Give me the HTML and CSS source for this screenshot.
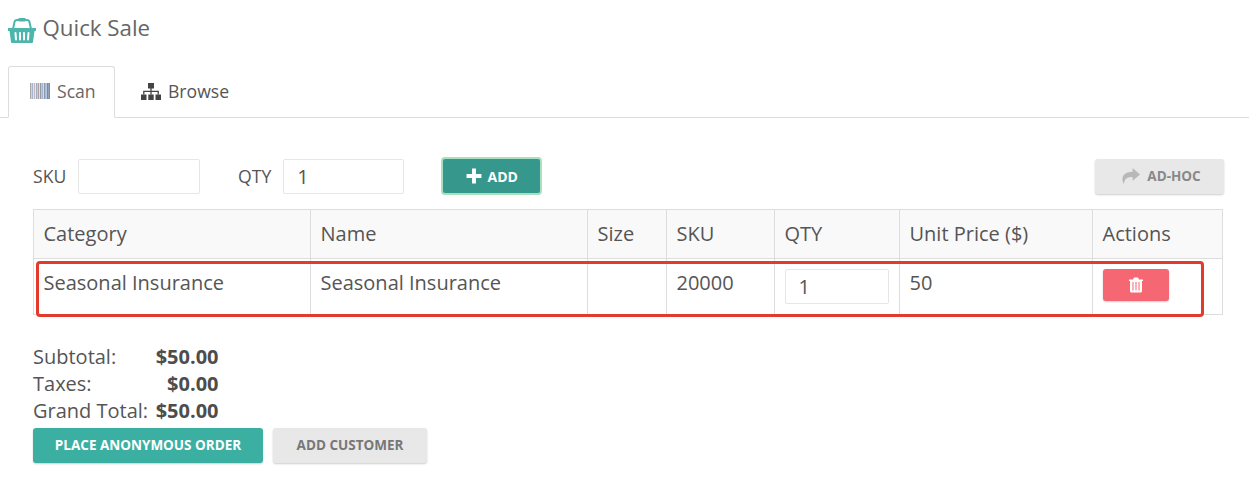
FILE: index.html
```html
<!DOCTYPE html>
<html lang="en">
<head>
<meta charset="utf-8">
<title>Quick Sale</title>
<link rel="stylesheet" href="styles.css">
</head>
<body>
<h1 class="title">
  <svg class="basket" viewBox="0 0 28 26" width="28" height="26" aria-hidden="true">
    <path d="M5 12 L6.5 5 Q7 3 9 3 H19 Q21 3 21.500 5 L23 12" fill="none" stroke="#4db6ac" stroke-width="2"/>
    <rect x="10" y="1" width="8" height="3.600" rx="1.500" fill="#4db6ac"/>
    <path d="M0 11 H28 V14 H26.500 L25 25 Q24.900 26 24 26 H4 Q3.100 26 3 25 L1.500 14 H0 Z" fill="#4db6ac"/>
    <path d="M7.500 16 L8 22.500 M12 16 V22.500 M16 16 V22.500 M20.500 16 L20 22.500" stroke="#fff" stroke-width="2" stroke-linecap="round"/>
  </svg>
  <span>Quick Sale</span>
</h1>
<nav class="tabs">
  <a class="tab active">
    <svg class="barcode" viewBox="0 0 20 16" width="20" height="16" aria-hidden="true">
      <rect x="0" width="1" height="16" fill="#a8a8a8"/><rect x="1" width="1" height="16" fill="#e0cfc8"/>
      <rect x="2" width="1" height="16" fill="#a8b4cc"/><rect x="3" width="1" height="16" fill="#ebdceb"/>
      <rect x="4" width="1" height="16" fill="#c0b8c8"/><rect x="5" width="1" height="16" fill="#efe6dc"/>
      <rect x="6" width="1" height="16" fill="#a0acbc"/><rect x="7" width="1" height="16" fill="#dfc8c0"/>
      <rect x="8" width="1" height="16" fill="#b0a09a"/><rect x="9" width="1" height="16" fill="#d6e0ee"/>
      <rect x="10" width="1" height="16" fill="#8f9aaa"/><rect x="11" width="1" height="16" fill="#e0bfa8"/>
      <rect x="12" width="1" height="16" fill="#a5b6d0"/><rect x="13" width="1" height="16" fill="#e4d8c8"/>
      <rect x="14" width="1" height="16" fill="#8c98ac"/><rect x="15" width="1" height="16" fill="#d4b0a0"/>
      <rect x="16" width="1" height="16" fill="#b4c6e0"/><rect x="17" width="1" height="16" fill="#888"/>
      <rect x="18" width="1" height="16" fill="#94a2b8"/><rect x="19" width="1" height="16" fill="#948680"/>
    </svg>
    Scan
  </a>
  <a class="tab">
    <svg class="sitemap" viewBox="0 0 20 17" width="20" height="17" aria-hidden="true">
      <path d="M7 0 H13 V5.500 H7 Z M0 11.500 H5.500 V17 H0 Z M7.300 11.500 H12.700 V17 H7.300 Z M14.500 11.500 H20 V17 H14.500 Z" fill="#444"/>
      <path d="M10 5 V11.500 M2.800 11.500 V8.300 H17.200 V11.500" fill="none" stroke="#444" stroke-width="1.300"/>
    </svg>
    Browse
  </a>
</nav>
<main class="panel">
  <form class="scan-form">
    <label class="field sku-field">SKU <input class="input sku-input" type="text"></label>
    <label class="field qty-field">QTY <input class="input qty-input" type="text" value="1"></label>
    <button class="btn btn-add" type="button">
      <svg viewBox="0 0 14 14" width="16" height="16" aria-hidden="true"><path d="M5.300 0.500 H8.700 V5.300 H13.500 V8.700 H8.700 V13.500 H5.300 V8.700 H0.500 V5.300 H5.300 Z" fill="#fff"/></svg>
      ADD
    </button>
    <button class="btn btn-grey btn-adhoc" type="button">
      <svg viewBox="0 0 18 15" width="19" height="16" aria-hidden="true"><path d="M11 0 L18 6 L11 12 V8.500 C6.500 8.500 3.500 9.500 2.800 15 C0.500 11.500 -0.500 3.800 11 3.400 Z" fill="#b8b8b8"/></svg>
      AD-HOC
    </button>
  </form>
  <div class="table-wrap">
    <table class="items">
      <thead>
        <tr>
          <th class="c-cat">Category</th><th class="c-name">Name</th><th class="c-size">Size</th><th class="c-sku">SKU</th><th class="c-qty">QTY</th><th class="c-price">Unit Price ($)</th><th>Actions</th>
        </tr>
      </thead>
      <tbody>
        <tr>
          <td>Seasonal Insurance</td><td>Seasonal Insurance</td><td></td><td>20000</td>
          <td><input class="input row-qty" type="text" value="1"></td>
          <td>50</td>
          <td>
            <button class="btn btn-delete" type="button" aria-label="Delete">
              <svg viewBox="0 0 14 16" width="14" height="16" aria-hidden="true">
                <path fill-rule="evenodd" d="M0 2.500 H4 L5 0.500 H9 L10 2.500 H14 V4 H13 V14 Q13 15.500 11.500 15.500 H2.500 Q1 15.500 1 14 V4 H0 Z M3.500 5 V13.500 H4.500 V5 Z M6.500 5 V13.500 H7.500 V5 Z M9.500 5 V13.500 H10.500 V5 Z" fill="#fff"/>
              </svg>
            </button>
          </td>
        </tr>
      </tbody>
    </table>
    <div class="highlight"></div>
  </div>
  <dl class="totals">
    <dt>Subtotal:</dt><dd>$50.00</dd>
    <dt>Taxes:</dt><dd>$0.00</dd>
    <dt>Grand Total:</dt><dd>$50.00</dd>
  </dl>
  <div class="actions">
    <button class="btn btn-teal" type="button">PLACE ANONYMOUS ORDER</button>
    <button class="btn btn-grey btn-customer" type="button">ADD CUSTOMER</button>
  </div>
</main>
</body>
</html>
```
FILE: styles.css
```css
* { box-sizing: border-box; }
html, body { margin: 0; padding: 0; }
body {
  font-family: "Open Sans", sans-serif;
  color: #555;
  background: #fff;
  width: 1249px;
  height: 489px;
  overflow: hidden;
}
.title {
  margin: 0;
  padding: 11px 0 0 8px;
  height: 66px;
  display: flex;
  align-items: flex-start;
  gap: 6.5px;
  font-size: 22.3px;
  font-weight: 400;
  line-height: 34px;
  color: #666;
}
.basket { margin-top: 6px; }
.tabs {
  display: flex;
  height: 52px;
  padding-left: 8px;
  border-bottom: 1px solid #ddd;
  font-size: 17.6px;
  color: #555;
}
.tab {
  display: flex;
  align-items: center;
  gap: 7px;
  height: 52px;
  padding: 0 19px 3px 25px;
  border: 1px solid transparent;
  border-radius: 3px 3px 0 0;
}
.tab.active {
  width: 107px;
  padding-left: 21px;
  padding-right: 0;
  color: #666;
  background: #fff;
  border-color: #ddd #ddd #fff;
}
.barcode, .sitemap { margin-top: 1px; }
.panel { padding: 39px 25px 0 33px; }
.scan-form {
  display: flex;
  align-items: center;
  height: 38px;
  font-size: 17.6px;
  color: #555;
}
.field { display: flex; align-items: center; gap: 12px; }
.sku-field { width: 205px; }
.qty-field { margin-right: 37px; }
.input {
  font-family: inherit;
  font-size: 20px;
  color: #555;
  background: #fff;
  border: 1px solid #e6e6e6;
  border-radius: 2px;
  height: 35px;
  padding: 0 13px;
  outline: none;
}
.sku-input { width: 122px; }
.qty-input { width: 121px; }
.btn {
  font-family: inherit;
  font-weight: 700;
  font-size: 13.5px;
  border: 0;
  border-radius: 3px;
  padding: 0;
  display: inline-flex;
  align-items: center;
  justify-content: center;
  box-shadow: 0 1px 2px rgba(0, 0, 0, .2);
}
.btn-add {
  width: 101px;
  height: 38px;
  gap: 6px;
  font-size: 14px;
  color: #fff;
  background: #36978c;
  border: 2px solid #a8e0c0;
  border-radius: 4px;
  box-shadow: none;
}
.btn-grey { background: #e8e8e8; color: #777; }
.btn-adhoc { margin-left: auto; width: 129px; height: 35px; gap: 7px; padding-left: 3px; color: #888; }
.table-wrap { position: relative; margin-top: 14px; }
.items {
  width: 1190px;
  border-collapse: collapse;
  table-layout: fixed;
  font-size: 20px;
  color: #555;
}
.items th, .items td {
  border: 1px solid #ddd;
  padding: 0 10px 0 9.5px;
  font-weight: 400;
  text-align: left;
  vertical-align: top;
}
.items th { height: 49px; background: #f9f9f9; line-height: 48px; }
.items td { height: 56px; line-height: 48px; }
.c-cat, .c-name { width: 277px; }
.c-size { width: 79px; }
.c-sku { width: 108px; }
.c-qty { width: 125px; }
.c-price { width: 193px; }
.row-qty { width: 104px; margin-top: 10px; display: block; }
.btn-delete { width: 66px; height: 32px; margin-top: 10px; background: #f56873; display: flex; }
.highlight {
  position: absolute;
  left: 3px;
  top: 52px;
  width: 1168px;
  height: 56px;
  border: 3px solid #e33a2e;
  border-radius: 4px;
  pointer-events: none;
}
.totals {
  margin: 28px 0 0;
  display: grid;
  grid-template-columns: max-content max-content;
  column-gap: 7.5px;
  font-size: 20px;
  line-height: 27px;
  color: #555;
}
.totals dt { font-weight: 400; }
.totals dd { margin: 0; font-weight: 700; text-align: right; color: #4d4d4d; }
.actions { display: flex; gap: 10px; margin-top: 4px; }
.actions .btn { height: 35px; padding-bottom: 1px; }
.btn-teal { width: 230px; background: #3aafa2; color: #fff; }
.btn-customer { width: 154px; }
```
